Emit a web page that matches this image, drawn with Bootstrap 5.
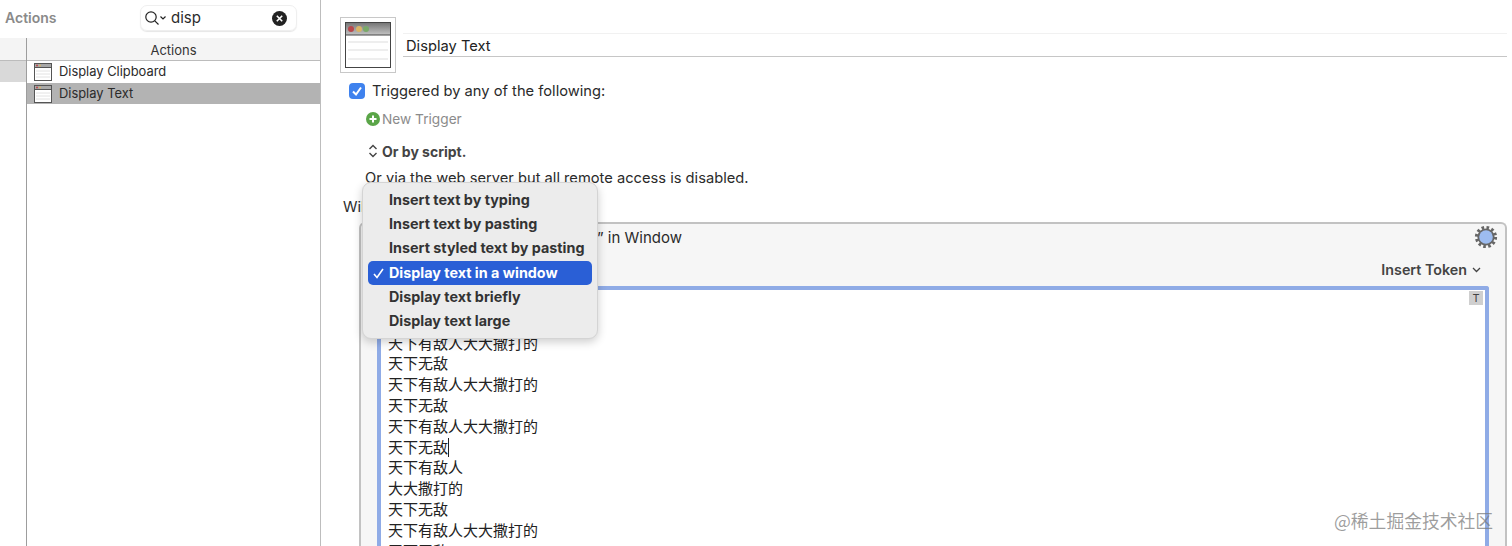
<!DOCTYPE html>
<html lang="en">
<head>
<meta charset="utf-8">
<title>Display Text</title>
<link href="https://cdn.jsdelivr.net/npm/bootstrap@5.3.0/dist/css/bootstrap.min.css" rel="stylesheet">
<style>
html,body{height:546px;overflow:hidden;background:#fff}
body{font-family:Inter,"Noto Sans CJK SC",sans-serif;font-size:14.7px;color:#2b2b2b;position:relative}
.shell{height:546px}
.left-pane{width:321px;flex:none;border-right:1px solid #bdbdbd}
.left-top{height:38px;padding-left:5px}
.pane-title{font-size:14px;line-height:16px;font-weight:600;color:#8a8a8a;width:135px;margin-top:-3px}
.search-box{width:157px;height:26px;margin-top:-2px;border:1px solid #efefef;border-radius:7px;padding:0 9px 0 3px;box-shadow:0 1px 1px #e6e6e6;font-size:15px}
.search-clear{width:15px;height:15px;border-radius:50%;background:#222;margin-left:auto}
.list-area{flex:1;min-height:0}
.group-col{width:27px;flex:none;border-right:1px solid #9d9d9d}
.col-head{height:23px;background:#f4f4f4;border-bottom:1px solid #bcbcbc;font-size:13px;color:#333;line-height:24px;text-align:center}
.group-sel{height:21px;background:#d9d9d9}
.action-row{height:22px;font-size:12.9px;padding-left:7px;gap:7px}
.action-row.sel{background:#b3b3b3;height:21px}
.right-pane{min-width:0;padding:17px 5px 0 19px}
.big-icon{width:56px;height:56px;border:1px solid #c8c8c8;flex:none;padding:4px}
.name-field{height:24px;margin:16px 0 0 7px;border-top:1px solid #f1f1f1;border-bottom:1px solid #c6c6c6;padding-left:3px;font-size:14.7px;line-height:24px;color:#222}
.check-box{width:16px;height:16px;border-radius:4px;background:#3f82ee;flex:none}
.trigger-row{margin:8px 0 0 9px;gap:7px;height:20px}
.new-row{margin:8px 0 0 26px;height:20px;color:#8b8b8b;font-size:13.700px;gap:2px}
.script-row{margin:12px 0 0 28px;height:20px;font-weight:700;color:#444;font-size:14px;gap:4px}
.web-row{margin:6px 0 0 25px;height:20px}
.will-row{margin:9px 0 0 3px;height:20px}
.action-panel{flex:1;margin:6px 0 0 19px;border:2px solid #c2c2c2;border-bottom:0;border-radius:6px 6px 0 0;background:#f6f6f6;padding:0 16px;min-height:0}
.panel-head{height:29px;padding:0 0 0 220px;font-size:15px}
.gear-slot{margin:-3px -9px 0 auto}
.token-row{height:33px;font-size:14.3px;font-weight:600;color:#444;gap:5px;padding-right:8px}
.text-box{flex:1;background:#fff;border:solid #8fabe6;border-width:4px 4px 0 4px;border-radius:3px 3px 0 0;padding:1px 0 0 7px;position:relative;font-family:"Noto Sans CJK SC",sans-serif;font-size:15px;color:#222;line-height:20.8px;min-height:0;overflow:hidden}
.text-line{height:20.8px;white-space:nowrap}
.caret-line{display:inline-block;width:1px;height:19px;background:#222;vertical-align:-4px}
.t-mark{position:absolute;top:1px;right:2px;width:14px;height:14px;background:#cfcfcf;color:#444;font:11px/14px Inter,sans-serif;text-align:center}
.pop-menu{position:absolute;left:362px;top:182px;width:236px;height:157px;background:#ececec;border:1px solid #d4d4d4;border-radius:9px;box-shadow:0 3px 10px rgba(0,0,0,.2);padding:5px;font-size:14.350px;font-weight:700;color:#333;z-index:5}
.pop-item{height:24.2px;border-radius:5px;padding-left:21px;position:relative;line-height:24px}
.pop-item.on{background:#2a5fd6;color:#fff}
.pop-check{position:absolute;left:5px;top:7px}
.watermark{position:absolute;left:1334px;top:507px;font-family:"Noto Sans CJK SC",sans-serif;font-size:17.8px;color:rgba(120,120,120,.72);z-index:6;white-space:nowrap}
</style>
</head>
<body>
<div class="shell d-flex">
  <div class="left-pane d-flex flex-column">
    <div class="left-top d-flex align-items-center">
      <div class="pane-title">Actions</div>
      <div class="search-box d-flex align-items-center">
        <svg width="23" height="16" viewBox="0 0 23 16" fill="none" stroke="#222" stroke-width="1.2"><circle cx="7" cy="7" r="5.2"/><path d="M10.8 10.8 14.5 14.5M16.5 6.5l2.5 2.5 2.500-2.500"/></svg>
        <span class="ms-1">disp</span>
        <span class="search-clear d-flex align-items-center justify-content-center"><svg width="7" height="7" viewBox="0 0 7 7" stroke="#fff" stroke-width="1.6"><path d="M.8.8l5.4 5.4M6.2.8.8 6.2"/></svg></span>
      </div>
    </div>
    <div class="list-area d-flex">
      <div class="group-col">
        <div class="col-head"></div>
        <div class="group-sel"></div>
      </div>
      <div class="flex-grow-1">
        <div class="col-head">Actions</div>
        <div class="action-row d-flex align-items-center">
          <svg width="18" height="18" viewBox="0 0 18 18" fill="#fff" stroke="#555"><rect x=".5" y=".5" width="17" height="17"/><path d="M.5 4.5h17"/><rect x="1" y="1" width="16" height="3" fill="#a8a8a8" stroke="none"/><circle cx="3" cy="2.500" r="1" fill="#b8484c" stroke="none"/><circle cx="6" cy="2.500" r="1" fill="#d9b566" stroke="none"/><path d="M2 8h14M2 11h14M2 14h14" stroke="#e2e2e2"/></svg>
          <span>Display Clipboard</span>
        </div>
        <div class="action-row sel d-flex align-items-center">
          <svg width="18" height="18" viewBox="0 0 18 18" fill="#fff" stroke="#555"><rect x=".5" y=".5" width="17" height="17"/><path d="M.5 4.5h17"/><rect x="1" y="1" width="16" height="3" fill="#a8a8a8" stroke="none"/><circle cx="3" cy="2.500" r="1" fill="#b8484c" stroke="none"/><circle cx="6" cy="2.500" r="1" fill="#d9b566" stroke="none"/><path d="M2 8h14M2 11h14M2 14h14" stroke="#e2e2e2"/></svg>
          <span>Display Text</span>
        </div>
      </div>
    </div>
  </div>
  <div class="right-pane flex-grow-1 d-flex flex-column">
    <div class="d-flex">
      <div class="big-icon">
        <svg width="46" height="46" viewBox="0 0 46 46" class="d-block"><defs><linearGradient id="tb" x1="0" y1="0" x2="0" y2="1"><stop offset="0" stop-color="#777"/><stop offset="1" stop-color="#c4c4c4"/></linearGradient></defs><rect x=".5" y=".5" width="45" height="45" fill="#fff" stroke="#444"/><rect x="1" y="1" width="44" height="12" fill="url(#tb)"/><path d="M1 13h44" stroke="#444"/><circle cx="6" cy="7" r="3" fill="#b8484c"/><circle cx="14" cy="7" r="3" fill="#d9b566"/><circle cx="21" cy="7" r="3" fill="#79a969"/><path d="M3 20h40M3 28h40M3 37h40" stroke="#ddd"/></svg>
      </div>
      <div class="name-field flex-grow-1">Display Text</div>
    </div>
    <div class="trigger-row d-flex align-items-center">
      <span class="check-box d-flex align-items-center justify-content-center"><svg width="12" height="12" viewBox="0 0 12 12" fill="none" stroke="#fff" stroke-width="2"><path d="M2 6.500 5 9.500 10 2.500"/></svg></span>
      <span>Triggered by any of the following:</span>
    </div>
    <div class="new-row d-flex align-items-center">
      <svg width="14" height="14" viewBox="0 0 14 14"><circle cx="7" cy="7" r="7" fill="#5aa548"/><path d="M7 3.500v7M3.500 7h7" stroke="#fff" stroke-width="2"/></svg>
      <span>New Trigger</span>
    </div>
    <div class="script-row d-flex align-items-center">
      <svg width="10" height="14" viewBox="0 0 10 14" fill="none" stroke="#444" stroke-width="1.4"><path d="M1.500 5 5 1.500 8.500 5M1.500 9 5 12.500 8.500 9"/></svg>
      <span>Or by script.</span>
    </div>
    <div class="web-row">Or via the web server but all remote access is disabled.</div>
    <div class="will-row">Will execute the following actions:</div>
    <div class="action-panel d-flex flex-column">
      <div class="panel-head d-flex align-items-center">
        <span>” in Window</span>
        <span class="gear-slot d-flex"><svg width="24" height="24" viewBox="0 0 24 24"><circle cx="12" cy="12" r="9.500" fill="none" stroke="#666" stroke-width="3.200" stroke-dasharray="2.600 2.400"/><circle cx="12" cy="12" r="8.600" fill="#666"/><circle cx="12" cy="12" r="6.800" fill="#9dbcf0"/></svg></span>
      </div>
      <div class="token-row d-flex align-items-center justify-content-end">
        <span>Insert Token</span>
        <svg width="9" height="6" viewBox="0 0 9 6" fill="none" stroke="#444" stroke-width="1.300"><path d="M1 1l3.500 3.500L8 1"/></svg>
      </div>
      <div class="text-box">
        <div class="t-mark">T</div>
        <div class="text-line">天下有敌人大大撒打的</div>
        <div class="text-line">天下无敌</div>
        <div class="text-line">天下有敌人大大撒打的</div>
        <div class="text-line">天下无敌</div>
        <div class="text-line">天下有敌人大大撒打的</div>
        <div class="text-line">天下无敌</div>
        <div class="text-line">天下有敌人大大撒打的</div>
        <div class="text-line">天下无敌<span class="caret-line"></span></div>
        <div class="text-line">天下有敌人</div>
        <div class="text-line">大大撒打的</div>
        <div class="text-line">天下无敌</div>
        <div class="text-line">天下有敌人大大撒打的</div>
        <div class="text-line">天下无敌</div>
      </div>
    </div>
  </div>
</div>
<div class="pop-menu">
  <div class="pop-item">Insert text by typing</div>
  <div class="pop-item">Insert text by pasting</div>
  <div class="pop-item">Insert styled text by pasting</div>
  <div class="pop-item on"><svg class="pop-check" width="11" height="11" viewBox="0 0 11 11" fill="none" stroke="#fff" stroke-width="1.600"><path d="M1 6l3 3.500L10 1"/></svg>Display text in a window</div>
  <div class="pop-item">Display text briefly</div>
  <div class="pop-item">Display text large</div>
</div>
<div class="watermark">@稀土掘金技术社区</div>
<script src="https://cdn.jsdelivr.net/npm/bootstrap@5.3.0/dist/js/bootstrap.bundle.min.js"></script>
</body>
</html>
